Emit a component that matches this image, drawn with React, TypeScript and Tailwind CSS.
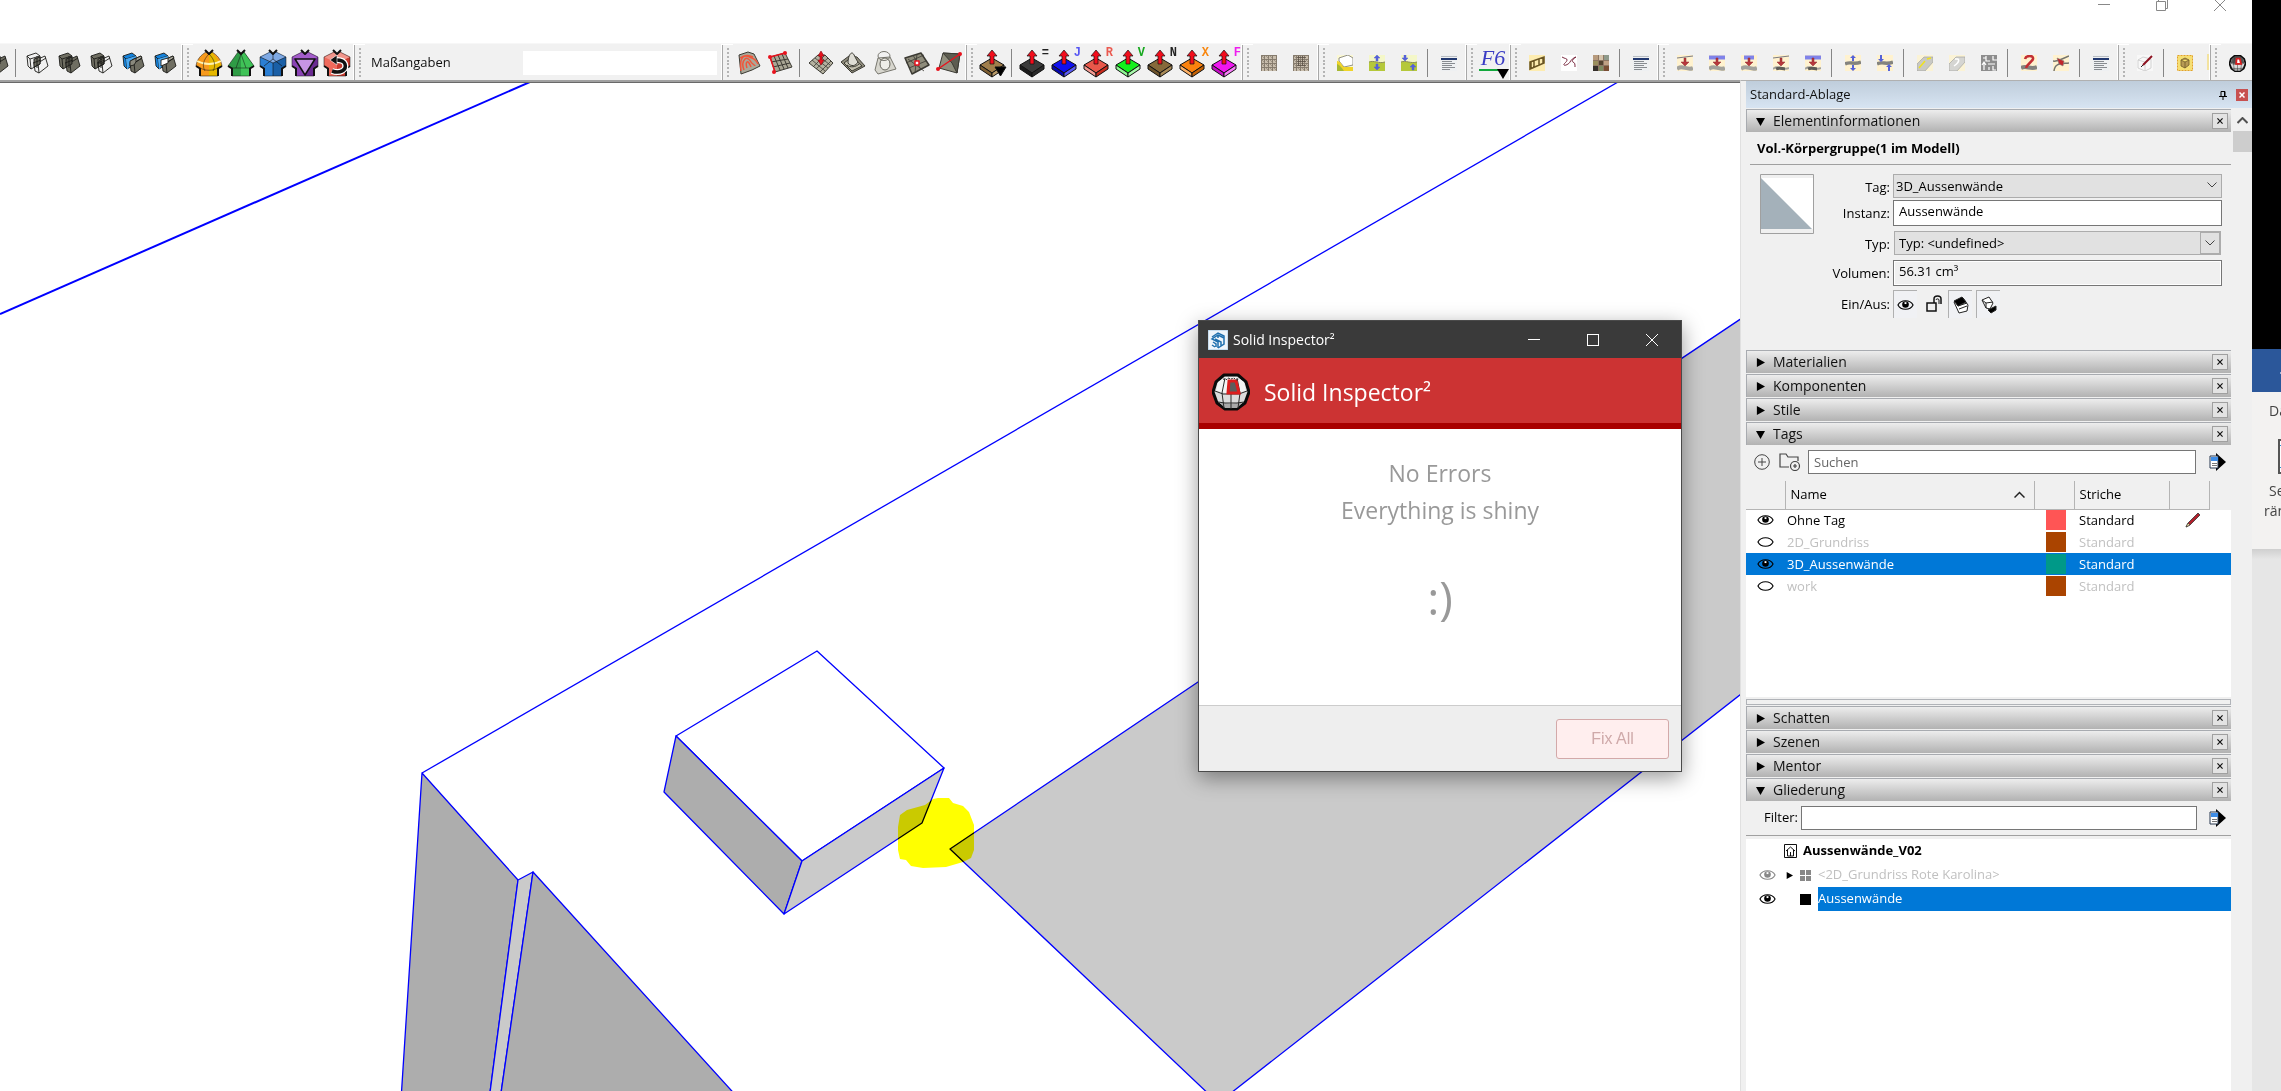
import React from 'react';

/* ---------- toolbar icons ---------- */

type Tone = { back: string; front: string; wire: boolean };

function SolidIcon({ kind }: { kind: number }) {
  const tones: Tone[] = [
    { back: 'none', front: 'none', wire: true },
    { back: '#6f6e62', front: '#6f6e62', wire: true },
    { back: '#6f6e62', front: 'none', wire: true },
    { back: '#1583dd', front: '#6f6e62', wire: false },
    { back: '#1583dd', front: '#6f6e62', wire: false },
  ];
  const t = tones[kind];
  return (
    <svg width="24" height="24" viewBox="0 0 24 24" strokeLinejoin="round" stroke="#1c1c18" strokeWidth=".9">
      <path d="M2 5l9-3 4 3v8l-9 5-3-3z" fill={t.back} />
      <path d="M2 5l3 3 10-3M5 8l1 10" fill="none" />
      {kind > 2 && <path d="M5 8l10-3v3l-6 3-2 7-1 0z" fill="#4aa9f2" stroke="none" />}
      <path d="M9 12l2-3 9-4 3 10-9 7-4-2z" fill={t.front} />
      {kind > 2 && <path d="M9 12l2-3 9-4 1 2-8 5z" fill="#a5a498" />}
      <path d="M9 12l4 0 8-5M13 12l1 10" fill="none" />
      {kind === 3 && <path d="M9 10l6-3v4l-2 3-4 1z" fill="#8a897d" />}
      {kind === 4 && <path d="M8 9l7-2v5l-7 3z" fill="#fff" />}
      {t.wire && <path d="M9 8l6-2v7l-6 3zM12 5v12M8 12l8-3" fill={kind === 0 ? '#6f6e62' : kind === 1 ? '#4f4e45' : 'none'} />}
    </svg>
  );
}

function GemIcon({ kind }: { kind: number }) {
  const p = [
    { l: '#f79a1e', r: '#e6b800', t: '#d9ab00' },
    { l: '#2f9c46', r: '#3fc257', t: '#2fae49' },
    { l: '#2b7fd4', r: '#1a5fa6', t: '#7ea9e4' },
    { l: '#8a43b6', r: '#6b2b93', t: '#a45dcb' },
    { l: '#ef6a5c', r: '#c73a2e', t: '#f2958b' },
  ][kind];
  const wide = kind >= 2;
  const outline = wide
    ? 'M1 8L11 3l3 2 3-2 10 5v9l-4 3v7H5v-7l-4-3z'
    : kind === 0
      ? 'M1 17C2 10 6 6 11 3l3 2 3-2c5 3 9 7 10 14l-4 2v8H5v-8z'
      : 'M1 17L11 3l3 2 3-2 10 14-4 2v8H5v-8z';
  return (
    <svg width="28" height="28" viewBox="0 0 28 28" strokeLinejoin="round" stroke="#111" strokeWidth="1">
      <path d={outline} fill={p.l} stroke="none" />
      <path d={wide ? 'M14 13L27 8v9l-4 3v7h-9z' : 'M14 5l3-2 10 14-4 2v8h-9z'} fill={p.r} stroke="none" />
      {wide && <path d="M1 8L11 3l3 2 3-2 10 5-13 6z" fill={p.t} stroke="none" />}
      {kind === 0 && <path d="M5 19l9-2v10H5z" fill="#f79a1e" stroke="none" />}
      <path d={outline} fill="none" strokeOpacity=".5" />
      <path d="M10 1l4 4 4-4M1 17l4 2.500v7.500M27 17l-4 2.500v7.500" fill="none" strokeWidth="2" />
      {kind === 0 && (
        <>
          <path d="M2 12c7 4 17 4 24 0" fill="none" stroke="#fff3b0" strokeWidth="2" />
          <path d="M14 5c-6 6-7 12-4 17M14 5c6 6 7 12 4 17M5 19c6 3 12 3 18 0" fill="none" strokeOpacity=".5" />
        </>
      )}
      {kind === 1 && <path d="M14 5l-5 14M14 5l5 14M5 19h18" fill="none" strokeOpacity=".5" />}
      {kind === 2 && <path d="M1 8l13 6 13-6M14 14v13M14 5v5l-9 7M14 10l9 7" fill="none" strokeOpacity=".6" />}
      {kind === 3 && <path d="M4 10h20l-10 16z" fill="#c795e4" strokeWidth="1.500" />}
      {kind === 4 && (
        <>
          <path d="M9 22c8 3 15-1 13-7-1-3-4-4-8-4" fill="none" stroke="#fff" strokeWidth="6" />
          <path d="M9 22c8 3 15-1 13-7-1-3-4-4-9-4" fill="none" strokeWidth="3.500" />
          <path d="M7 11l7-5v10z" fill="#111" stroke="#fff" strokeWidth=".6" />
        </>
      )}
    </svg>
  );
}

function TerrainIcon({ kind }: { kind: number }) {
  const g = '#a9a694';
  return (
    <svg width="26" height="26" viewBox="0 0 26 26" fill="none" strokeLinejoin="round" stroke="#3b3a33" strokeWidth="1">
      {kind === 0 && (
        <>
          <path d="M3 5l9-3 6 2 6 12-8 4-11 4z" fill="#aaa899" />
          <path d="M5 21c-1-7-1-11 2-14s6 0 9 1 5 4 6 6M8 20c-2-5-1-9 1-11s5 1 6 3 4 3 4 4M11 18c-1-3-1-5 0-6s3 2 4 5M4 8c4-3 9-3 13-1" stroke="#f1553a" strokeWidth="1.500" />
        </>
      )}
      {kind === 1 && (
        <>
          <path d="M2 7l15-4 7 14-17 5z" fill={g} />
          <path d="M6 6l6 14M10 5l6 14M14 4l6 14M3 12l17-3M5 17l17-4" />
          <path d="M2 7l15-4M2 7l5 15" stroke="#e8121d" strokeWidth="1.500" />
          <g fill="#e8121d" stroke="none"><circle cx="2" cy="7" r="2" /><circle cx="17" cy="3" r="2" /><circle cx="6" cy="22" r="2" /></g>
        </>
      )}
      {kind === 2 && (
        <>
          <path d="M1 13l9-8h7l8 8-10 11z" fill="#b4b1a0" />
          <path d="M4 10l13 11M7 8l13 10M10 5l12 10M5 17L17 5M8 19L20 8M12 22l11-11" strokeWidth=".8" />
          <path d="M13 1l3 5h-2v4h2l-3 5-3-5h2V6h-2z" fill="#e8121d" stroke="#8a0a10" strokeWidth=".6" />
        </>
      )}
      {kind === 3 && (
        <>
          <path d="M1 12l8-6 8 1 8 9-13 7z" fill="#8f8c7c" />
          <path d="M4 13l8-6 10 9-10 5z" fill="#c2bfae" />
          <path d="M8 13c0-6 2-10 4-10s3 5 6 9c-2 4-7 5-10 1z" fill="#deddd5" />
          <path d="M7 15c3 3 9 2 12-1" />
        </>
      )}
      {kind === 4 && (
        <>
          <path d="M6 8l12-1 6 12-18 5-3-4z" fill="#d7d6ce" stroke="#77766e" />
          <ellipse cx="13" cy="14" rx="5" ry="6" fill="#efeee8" stroke="#66655c" />
          <ellipse cx="12" cy="6" rx="6" ry="4.500" stroke="#77766e" />
        </>
      )}
      {kind === 5 && (
        <>
          <path d="M1 8l16-5 8 12-17 9z" fill="#8f8d7c" strokeWidth="1.500" />
          <path d="M4 9l16 12M9 5l8 15M2 13l18-8M5 18l17-7M13 4l-2 19" strokeWidth=".8" />
          <rect x="11" y="11" width="4" height="4" fill="#fff" stroke="#e8121d" strokeWidth="1.500" />
        </>
      )}
      {kind === 6 && (
        <>
          <path d="M7 3l17 1-3 19-18-5z" fill="#908f7e" />
          <path d="M7 3l9 10 5 10 3-19z" fill="#5d5c50" />
          <path d="M2 19L24 4" stroke="#e8121d" strokeWidth="1.500" />
          <g fill="#e8121d" stroke="none"><circle cx="2" cy="19" r="2" /><circle cx="24" cy="4" r="2" /></g>
        </>
      )}
    </svg>
  );
}

type PushProps = { top: string; left: string; right: string; mark?: string; markClass?: string; drop?: boolean };

function PushIcon({ top, left, right, mark, markClass, drop }: PushProps) {
  return (
    <span className="relative flex size-8 items-center justify-center">
      <svg width="28" height="30" viewBox="0 0 28 30" strokeLinejoin="round" stroke="#111" strokeWidth="1">
        <path d="M1 17l12-7 12 7-12 8z" fill={top} />
        <path d="M1 17l12 8v4L1 21z" fill={left} />
        <path d="M25 17l-12 8v4l12-8z" fill={right} />
        <path d="M13 2l5 6h-3v8h-4V8H8z" fill="#f20d1c" strokeWidth=".7" />
        {drop && <path d="M16 19h11l-5.500 9z" fill="#000" />}
      </svg>
      {mark && <span className={`absolute top-0 right-0 font-['Liberation_Mono'] text-xs leading-3 font-bold ${markClass}`}>{mark}</span>}
    </span>
  );
}

function SmallIcon({ kind }: { kind: string }) {
  const bg: Record<string, string> = {
    mesh1: '#c8bdac', mesh2: '#c8bdac', yellow: '#fbf8d4', up1: '#f4f7c8', up2: '#f4f7c8', fence: '#fdecb0', curve: '#fff',
    tiles: '#8d7663', list: '#eef0f2', cube: '#fbf3d6', road1: '#fbf3d6', road2: '#fbf3d6',
  };
  const thin = kind === 'drop1' || kind === 'drop4';
  return (
    <svg width="16" height="16" viewBox="0 0 16 16" fill="none" stroke="#4a4a46" strokeWidth="1">
      <rect width="16" height="16" fill={bg[kind] ?? '#fff2cf'} stroke="none" />
      {(kind === 'mesh1' || kind === 'mesh2') && (
        <>
          <path d="M.5 0v16M3.500 0v16M7.500 0v16M11.500 0v16M15.500 0v16M0 .5h16M0 4.500h16M0 8.500h16M0 12.500h16" stroke="#857b6d" />
          <path d="M0 0l16 16M8 0l8 8M0 8l8 8M4 0l12 12M0 4l12 12" stroke="#8d8374" strokeWidth=".7" />
          {kind === 'mesh2' && <path d="M4 2.500h9M4 6.500h9M4 10.500h9M5.500 1v10M9.500 1v10" stroke="#5a5146" strokeWidth=".8" />}
        </>
      )}
      {kind === 'yellow' && (
        <>
          <path d="M0 8l5 2 3 6H0z" fill="#a7b831" stroke="none" />
          <path d="M2 3l9-3 5 3v7l-9 2-5-6z" fill="#fff" stroke="#77766a" strokeWidth=".8" />
          <path d="M0 6c4 0 4 4 7 6h9v4H7C4 12 3 10 0 9z" fill="#f0d428" stroke="none" />
        </>
      )}
      {(kind === 'up1' || kind === 'up2') && (
        <>
          <path d="M0 7c5-2 10 2 16 0v9H0z" fill="#b5c83a" stroke="none" />
          <path d="M0 7c5-2 10 2 16 0" stroke="#8b8d5b" />
          {kind === 'up1'
            ? <path d="M8 0l3 3H9v3H7V3H5zM8 15l3-3H9V9H7v3H5z" fill="#5561d8" stroke="#5561d8" strokeWidth=".5" />
            : <path d="M4 6l3-3H5V0H3v3H1zM12 9l3 3h-2v3h-2v-3H9z" fill="#5561d8" stroke="#5561d8" strokeWidth=".5" />}
        </>
      )}
      {kind === 'list' && (
        <>
          <path d="M0 4h16" stroke="#22386f" strokeWidth="2" />
          <path d="M0 1.500h16" stroke="#b9bdc2" />
          <path d="M1 6.500h10M1 8.500h13M1 10.500h10M1 12.500h13M1 14.500h8" stroke="#7c8086" strokeWidth=".9" />
        </>
      )}
      {kind === 'fence' && <path d="M1 7l14-5v6L1 14zM5 6v6M10 4v6M2 14V6M14 2v7" stroke="#6a5524" strokeWidth="1.500" />}
      {kind === 'curve' && <path d="M1 2c3 2 5 1 5 3S2 9 3 10s5-1 6-3 3-4 6-5c-3 2-5 4-3 5s2 2 2 5" stroke="#7a2a40" />}
      {kind === 'tiles' && (
        <>
          <path d="M0 0h5v5H0z" fill="#b79a7c" stroke="none" /><path d="M6 0h4v5H6z" fill="#d5c4ac" stroke="none" /><path d="M11 0h5v5h-5z" fill="#8f9a8b" stroke="none" />
          <path d="M0 6h5v4H0z" fill="#9a8f5e" stroke="none" /><path d="M6 6h4v4H6z" fill="#53422f" stroke="none" /><path d="M11 6h5v4h-5z" fill="#c0a184" stroke="none" />
          <path d="M0 11h5v5H0z" fill="#35302b" stroke="none" /><path d="M6 11h4v5H6z" fill="#7d8c62" stroke="none" /><path d="M11 11h5v5h-5z" fill="#7a4e33" stroke="none" />
        </>
      )}
      {kind.startsWith('drop') && (
        <>
          <path d={thin ? 'M0 3L16 1' : kind === 'drop3' ? 'M3 2.500h10' : 'M0 2.500h16'} stroke={thin ? '#7b7a80' : '#7f82ea'} strokeWidth={thin ? 1 : 4} />
          <path d="M0 14c5-5 10 2 16-1" stroke="#a3a29c" strokeWidth={kind === 'drop4' || kind === 'drop5' ? 2 : 4} />
          {(kind === 'drop4' || kind === 'drop5') && <path d="M3 14c4-2 6 0 9 0" stroke="#5e5d57" strokeWidth="3" />}
          <path d="M7 3h2v4h3l-4 4-4-4h3z" fill="#b8383c" stroke="#8f2a2e" strokeWidth=".5" />
        </>
      )}
      {(kind === 'shift1' || kind === 'shift2') && (
        <>
          <path d="M0 9c5-3 9 1 16-2" stroke="#84837e" strokeWidth="3.500" />
          {kind === 'shift1'
            ? <path d="M8 0l3 3H9v3H7V3H5zM8 16l3-3H9v-3H7v3H5z" fill="#5561d8" stroke="none" />
            : <path d="M4 7l3-3H5V0H3v4H1zM12 9l3 3h-2v4h-2v-4H9z" fill="#5561d8" stroke="none" />}
        </>
      )}
      {kind === 'road1' && <><path d="M0 9L7 2h9v5l-8 9H0z" fill="#c9c9c4" stroke="#a5a5a0" strokeWidth=".7" /><path d="M2 13L8 6M10 4l4-1" stroke="#f0e21c" strokeWidth="1.500" /></>}
      {kind === 'road2' && <><path d="M0 9L7 2h9v5l-8 9H0z" fill="#d5d5d2" stroke="#a5a5a0" strokeWidth=".7" /><path d="M5 11c3-2 6-5 4-7H6" stroke="#fff" strokeWidth="1.500" /></>}
      {kind === 'maze' && <><rect width="16" height="16" fill="#8d8d8d" stroke="none" /><path d="M3 15V8M1 10l2-3 2 3M5 1v5h4M12 1v4h4M7 9h7M8 12v3M12 11v4h3M2 3h3" stroke="#fff" strokeWidth="1.200" /></>}
      {kind === 'q1' && <><path d="M0 13c5-3 10 2 16-1" stroke="#84837e" strokeWidth="4" /><path d="M4 4c1-4 9-4 8 0-1 3-6 5-7 9" stroke="#c32f33" strokeWidth="2.500" /></>}
      {kind === 'q2' && <><path d="M0 6c5 1 8-2 16-5M1 16c1-8 6-7 15-8" stroke="#75746e" strokeWidth="1.500" /><path d="M4 3l7 3-1 5-4-2z" fill="#c2262c" stroke="#84837e" strokeWidth=".6" /></>}
      {kind === 'pen' && <><rect width="16" height="16" fill="#f8f8f8" stroke="none" /><path d="M1 5l5-3 8 2v9l-6 3-7-3zM1 5l7 2v9M8 7l6-3" stroke="#c9c9c9" strokeWidth=".8" /><path d="M6 10l9-9" stroke="#8d1220" strokeWidth="2" /><path d="M4 12l2-2" stroke="#222" /></>}
      {kind === 'cube' && <><rect x=".5" y=".5" width="15" height="15" fill="#f6df72" stroke="#e0a12c" strokeDasharray="2 1" /><path d="M4 5l4-2 4 2v5l-4 3-4-2zM4 5l4 2 4-2M8 7v6" fill="#b79a54" stroke="#6f5a28" strokeWidth=".8" /></>}
    </svg>
  );
}

function BallIcon({ size, dark }: { size: number; dark?: boolean }) {
  return (
    <svg width={size} height={size} viewBox="0 0 38 38" fill="none" stroke="#2b2b2b" strokeWidth="1">
      <path d="M12 2h14l8 7 3 10-4 11-8 6H13l-8-6-4-11 3-10z" fill="#dcdcdc" stroke="#0b0b0b" strokeWidth={dark ? 4 : 3} strokeLinejoin="round" />
      <path d="M6 9l7-5h12l7 5 2 9-15 3L4 18z" fill={dark ? '#555' : '#f4f4f4'} stroke="none" />
      <path d="M7 29l12 2 12-2-6 6H13z" fill="#a9a9a9" stroke="none" />
      <path d="M3 18l8 3h16l8-3M6 29l7 1h12l7-1M13 5l-3 15 2 15M25 5l3 15-2 15M19 21v15" />
      <path d="M17 8h7l3 12H16z" fill={dark ? '#fff' : '#5c5c5c'} stroke="#dc1e1e" strokeWidth={dark ? 4 : 3} />
      <path d="M11 6l3 1 2-2 3 1 3-1 2 2 3-1" stroke="#333" strokeDasharray="2 1" />
    </svg>
  );
}

/* ---------- toolbar layout ---------- */

function Slot({ children, label }: { children: React.ReactNode; label: string }) {
  return (
    <button type="button" aria-label={label} className="flex h-9 w-8 shrink-0 items-center justify-center pt-0.5">
      {children}
    </button>
  );
}

function Sep() {
  return (
    <span className="flex w-2 shrink-0 items-center pt-0.5 pl-0.5">
      <span className="h-7 w-px bg-[#858585]" />
    </span>
  );
}

function Grip() {
  return (
    <span className="flex w-3 shrink-0 items-stretch border-t border-white">
      <span className="w-px bg-white" />
      <span className="w-px bg-[#a8a8a8]" />
      <span className="my-0.5 ml-1 flex flex-col justify-around">
        {Array.from({ length: 8 }, (_, i) => <span key={i} className="size-0.5 bg-[#b4b4b4]" />)}
      </span>
    </span>
  );
}

function Small({ names }: { names: string[] }) {
  return <>{names.map((n, i) => <Slot key={i} label={n}><SmallIcon kind={n} /></Slot>)}</>;
}

function Toolbar() {
  const push: PushProps[] = [
    { top: '#3a3a3a', left: '#1b1b1b', right: '#2a2a2a', mark: '=', markClass: 'text-[#222222]' },
    { top: '#1010f0', left: '#0505b0', right: '#5a5af5', mark: 'J', markClass: 'text-[#5555f2]' },
    { top: '#e8574a', left: '#f59a92', right: '#c82a1c', mark: 'R', markClass: 'text-[#ea5a50]' },
    { top: '#14f01c', left: '#8df792', right: '#a8f8ab', mark: 'V', markClass: 'text-[#17a81f]' },
    { top: '#86693a', left: '#6d532b', right: '#a98b58', mark: 'N', markClass: 'text-[#222222]' },
    { top: '#fb820e', left: '#fdb066', right: '#c56205', mark: 'X', markClass: 'text-[#f8860e]' },
    { top: '#f016f0', left: '#c60cc6', right: '#f97cf9', mark: 'F', markClass: 'text-[#ee1cee]' },
  ];
  return (
    <div className="flex h-[37px] shrink-0 overflow-hidden border-t border-[#f7f7f7] bg-[#f1f1f1]">
      <div className="-ml-[19px] flex shrink-0">
        <Slot label="Außenhülle"><SolidIcon kind={1} /></Slot>
        <Sep />
        {[0, 1, 2, 3, 4].map((k) => <Slot key={k} label={`Volumenkörper ${k + 1}`}><SolidIcon kind={k} /></Slot>)}
        <Grip />
        {[0, 1, 2, 3, 4].map((k) => <Slot key={k} label={`Form ${k + 1}`}><GemIcon kind={k} /></Slot>)}
        <Grip />
        <label className="flex w-[356px] items-center justify-between pt-0.5 pr-1 pl-1.5 text-[13px] text-[#111111]">
          Maßangaben
          <input type="text" className="h-6 w-[194px] bg-white px-1 outline-none" />
        </label>
        <Grip />
        {[0, 1].map((k) => <Slot key={k} label={`Sandkasten ${k + 1}`}><TerrainIcon kind={k} /></Slot>)}
        <Sep />
        {[2, 3, 4, 5, 6].map((k) => <Slot key={k} label={`Sandkasten ${k + 1}`}><TerrainIcon kind={k} /></Slot>)}
        <Grip />
        <Slot label="Push Pull"><PushIcon top="#a07e4b" left="#7d5e31" right="#b89a68" drop /></Slot>
        <Sep />
        {push.map((p) => <Slot key={p.mark} label={`Push Pull ${p.mark}`}><PushIcon {...p} /></Slot>)}
        <Grip />
        <Small names={['mesh1', 'mesh2']} />
        <Grip />
        <Small names={['yellow', 'up1', 'up2']} />
        <Sep />
        <Small names={['list']} />
        <Grip />
        <Slot label="Fredo6">
          <span className="relative flex size-8 items-start justify-center">
            <span className="border-b-2 border-[#12a83c] px-0.5 font-['Liberation_Serif'] text-[22px] leading-[22px] text-[#3a3cc4] italic">F6</span>
            <svg className="absolute right-0 bottom-0" width="12" height="10" viewBox="0 0 12 10"><path d="M0 0h12L6 10z" /></svg>
          </span>
        </Slot>
        <Grip />
        <Small names={['fence', 'curve', 'tiles']} />
        <Sep />
        <Small names={['list']} />
        <Grip />
        <Small names={['drop1', 'drop2', 'drop3', 'drop4', 'drop5']} />
        <Sep />
        <Small names={['shift1', 'shift2']} />
        <Sep />
        <Small names={['road1', 'road2', 'maze']} />
        <Sep />
        <Small names={['q1', 'q2']} />
        <Sep />
        <Small names={['list']} />
        <Grip />
        <Small names={['pen']} />
        <Sep />
        <Small names={['cube']} />
        <span className="flex w-2 shrink-0 items-center justify-end"><span className="h-4 w-0.5 bg-[#f3e3a0]" /></span>
        <Grip />
        <Slot label="Solid Inspector"><BallIcon size={17} dark /></Slot>
      </div>
    </div>
  );
}

/* ---------- model view ---------- */

function Model() {
  return (
    <svg className="block h-full w-full" aria-label="Modellansicht" stroke="#0000ff" strokeWidth="1.300" strokeLinejoin="round" fill="none">
      <g transform="translate(0 -83)">
        <path d="M0 314L530 82" strokeWidth="2" />
        <path d="M422 773L1618 82" />
        <path d="M422 773L518 880L489 1100H401z" fill="#adadad" />
        <path d="M518 880l15-8L500 1100H489z" fill="#cacaca" />
        <path d="M533 872L740 1100H500z" fill="#adadad" />
        <path d="M817 651L944 768L802 861L676 736z" fill="#fff" />
        <path d="M676 736L802 861L784 914L664 792z" fill="#adadad" />
        <path d="M802 861L944 768L922 823L784 914z" fill="#cacaca" />
        <path d="M950 849L1198 682L1745 316V691L1222 1100H1215z" fill="#cacaca" />
        <path d="M933 799L938 798H949L953 803L963 806L969 812L974 825V850L971 858L963 862L946 867L923 868L911 866L906 860L900 859L898 850V827L900 815L907 810L925 805z" className="mix-blend-multiply" fill="#ffff00" stroke="none" />
      </g>
    </svg>
  );
}

function InspectorDialog() {
  return (
    <section aria-label="Solid Inspector" className="absolute top-[238px] left-[1198px] flex h-[452px] w-[484px] flex-col border border-[#4a4a4a] bg-white shadow-[0_6px_20px_rgba(0,0,0,0.4)]">
      <header className="flex h-[37px] items-center bg-[#3a3a3a] pl-[9px] text-white">
        <svg width="20" height="20" viewBox="0 0 20 20" fill="none" stroke="#1f6fae" strokeWidth="1.500">
          <rect width="20" height="20" fill="#eef4fa" stroke="#9fc4e2" strokeWidth="1" />
          <path d="M4 7l6-4 6 3v8l-6 4M16 8l-6-3-6 4 6 3v6M5 12l3 2v3M7 9l6 3v4M4 15l3 2M10 5v3" />
        </svg>
        <h2 className="ml-[5px] flex-1 text-sm">Solid Inspector²</h2>
        <button type="button" aria-label="Minimieren" className="flex h-full w-[59px] items-center justify-center"><span className="h-px w-3 bg-white" /></button>
        <button type="button" aria-label="Maximieren" className="flex h-full w-[59px] items-center justify-center"><span className="size-3 border border-white" /></button>
        <button type="button" aria-label="Schließen" className="flex h-full w-[59px] items-center justify-center">
          <svg width="12" height="12" viewBox="0 0 12 12" stroke="#fff"><path d="M0 0l12 12M12 0L0 12" /></svg>
        </button>
      </header>
      <div className="flex h-[71px] items-center gap-3.5 border-b-6 border-[#a90000] bg-[#cc3333] pt-0.5 pl-[13px] text-white">
        <BallIcon size={38} />
        <h1 className="text-[23px] leading-8">Solid Inspector²</h1>
      </div>
      <div className="flex-1 pt-[26px] text-center text-[23px] leading-[37px] text-[#999999]">
        <p>No Errors</p>
        <p>Everything is shiny</p>
        <p className="pt-[38px] text-[46px] leading-[60px]">:)</p>
      </div>
      <footer className="flex h-[66px] items-center justify-end border-t border-[#cccccc] bg-[#eeeeee] pr-3">
        <button type="button" disabled className="h-10 w-[113px] rounded-[3px] border border-[#d3a9a9] bg-[#ffeeee] font-['Liberation_Sans'] text-base text-[#cfa9a9]">Fix All</button>
      </footer>
    </section>
  );
}

/* ---------- tray ---------- */

function Triangle({ open, size = 9 }: { open?: boolean; size?: number }) {
  return (
    <svg width={size} height={size} viewBox="0 0 10 10" className="shrink-0"><path d={open ? 'M0 1h10L5 10z' : 'M1 0l9 5-9 5z'} /></svg>
  );
}

function PanelHeader({ title, open }: { title: string; open?: boolean }) {
  return (
    <header className="mb-px flex h-[23px] shrink-0 items-center border-t border-l border-[#a8abb0] bg-linear-to-b from-[#ededed] to-[#b2b2b2] pr-[3px] pl-[9px]">
      <Triangle open={open} />
      <h3 className="ml-2 flex-1 text-sm leading-5 text-[#111111]">{title}</h3>
      <button type="button" aria-label={`${title} schließen`} className="flex size-4 items-center justify-center border border-[#a0a0a0] bg-[#e3e3e3]">
        <svg width="6" height="6" viewBox="0 0 7 6" stroke="#111" strokeWidth="1.400"><path d="M.5 0l6 6M6.500 0l-6 6" /></svg>
      </button>
    </header>
  );
}

function Eye({ closed, className }: { closed?: boolean; className?: string }) {
  return (
    <svg width="17" height="12" viewBox="0 0 18 12" className={className} fill="none" stroke="currentColor" strokeWidth="1.200">
      <path d="M1 6C4 0 14 0 17 6 14 12 4 12 1 6z" fill="#fff" fillOpacity={closed ? 1 : 0} />
      {!closed && <><circle cx="9" cy="5.500" r="3.500" fill="currentColor" stroke="none" /><rect x="8" y="3" width="2" height="2" fill="#fff" stroke="none" /></>}
    </svg>
  );
}

function ArrowMenu() {
  return (
    <button type="button" aria-label="Details" className="shrink-0">
      <svg width="18" height="20" viewBox="0 0 18 20">
        <path d="M7 1l10 9-10 9z" fill="#000" />
        <path d="M1 4h8v12H1z" fill="#fff" stroke="#26364f" />
        <path d="M2 5h7v4H2z" fill="#3f8de6" />
        <path d="M3 11.500h5M3 13.500h5" stroke="#777" />
      </svg>
    </button>
  );
}

function Chevron() {
  return <svg width="10" height="6" viewBox="0 0 10 6" fill="none" stroke="#444"><path d="M.5.5L5 5 9.500.5" /></svg>;
}

const toggle = 'flex h-7 w-[25px] items-center justify-center';
const toggleOn = 'flex h-7 w-6 items-center justify-center border-t border-l border-[#b0b0b0] bg-[#f0f1f4]';

function ElementInfo() {
  return (
    <section>
      <PanelHeader title="Elementinformationen" open />
      <h4 className="ml-1 flex h-8 items-center border-b border-[#a0a0a0] pl-[7px] text-[13px] font-bold">Vol.-Körpergruppe(1 im Modell)</h4>
      <div className="flex pt-[9px] pr-[9px] pl-3.5">
        <svg width="54" height="60" viewBox="0 0 54 60" aria-label="Material">
          <path d="M.5.500h53v59H.5z" fill="#f0f0f0" stroke="#a0a0a0" />
          <path d="M1 4h52v51H1z" fill="#fff" />
          <path d="M1 4l51 51H1z" fill="#a4b1ba" />
        </svg>
        <div className="grid h-[176px] flex-1 grid-cols-[76px_1fr] content-start gap-x-[3px] text-[13px] leading-5">
          <label htmlFor="tag" className="flex h-[26px] items-center justify-end">Tag:</label>
          <span className="relative h-[26px]">
            <select id="tag" className="h-6 w-full appearance-none border border-[#acacac] bg-[#e1e1e1] pl-0.5"><option>3D_Aussenwände</option></select>
            <span className="pointer-events-none absolute top-2 right-[5px] flex"><Chevron /></span>
          </span>
          <label htmlFor="inst" className="flex h-[26px] items-center justify-end">Instanz:</label>
          <input id="inst" defaultValue="Aussenwände" className="mb-[5px] h-[26px] w-full border border-[#767676] bg-white pb-1 pl-[5px]" />
          <label htmlFor="typ" className="flex h-[26px] items-center justify-end">Typ:</label>
          <span className="relative h-[29px] px-px">
            <select id="typ" className="h-6 w-full appearance-none border border-[#acacac] bg-[#e1e1e1] pl-1"><option>Typ: &lt;undefined&gt;</option></select>
            <span className="pointer-events-none absolute top-px right-0.5 flex h-[22px] w-5 items-center justify-center border border-[#acacac]"><Chevron /></span>
          </span>
          <label htmlFor="vol" className="flex h-[26px] items-center justify-end">Volumen:</label>
          <input id="vol" readOnly value="56.31 cm³" className="mb-1 h-[26px] w-full border border-[#767676] bg-[#f0f0f0] pb-1 pl-[5px] shadow-[inset_0_0_0_1px_#ffffff]" />
          <span className="flex h-[28px] items-center justify-end">Ein/Aus:</span>
          <span className="flex">
            <button type="button" aria-label="Sichtbar" className={toggleOn}><Eye /></button>
            <button type="button" aria-label="Sperren" className={`${toggle} ml-1`}>
              <svg width="18" height="18" viewBox="0 0 18 18" fill="none" stroke="#111" strokeWidth="1.500"><path d="M2 8h9v8H2zM9 8V4c0-4 7-4 7 0v5" /><path d="M11 5c0-1.500 3-1.500 3 0v4" strokeWidth="1" /></svg>
            </button>
            <button type="button" aria-label="Schatten empfangen" className={`${toggleOn} ml-0.5`}>
              <svg width="16" height="18" viewBox="0 0 16 18" fill="#fff" stroke="#222" strokeWidth="1"><path d="M1 6l9-4 5 7-1 6-8 2z" /><path d="M1 5l8-4 4 5-8 4z" fill="#000" /><path d="M5 10l9-3M6 13l8-3" /></svg>
            </button>
            <button type="button" aria-label="Schatten werfen" className={`${toggleOn} ml-1`}>
              <svg width="16" height="18" viewBox="0 0 16 18" fill="#fff" stroke="#222" strokeWidth="1"><path d="M1 4l7-3 4 6-3 6-4-1z" /><path d="M1 4l4 3 7-1M5 7v5" /><path d="M7 14l8-4v4l-5 3z" fill="#000" /></svg>
            </button>
          </span>
        </div>
      </div>
    </section>
  );
}

const tags = [
  { name: 'Ohne Tag', swatch: 'bg-[#ff5555]', row: 'text-black', off: false, pen: true },
  { name: '2D_Grundriss', swatch: 'bg-[#aa4400]', row: 'text-[#c0c0c0]', off: true, pen: false },
  { name: '3D_Aussenwände', swatch: 'bg-[#009988]', row: 'bg-[#0078d7] text-white', off: false, pen: false },
  { name: 'work', swatch: 'bg-[#aa4400]', row: 'text-[#c0c0c0]', off: true, pen: false },
];

function TagsPanel() {
  const th = 'border-r border-b border-[#b4b4b4] p-0 text-left font-normal';
  return (
    <section>
      <PanelHeader title="Tags" open />
      <div className="flex h-[35px] items-center pb-[3px] pl-2">
        <button type="button" aria-label="Tag hinzufügen">
          <svg width="16" height="16" viewBox="0 0 16 16" fill="none" stroke="#444"><circle cx="8" cy="8" r="7.300" /><path d="M8 4v8M4 8h8" /></svg>
        </button>
        <button type="button" aria-label="Tag-Ordner hinzufügen" className="ml-[9px]">
          <svg width="22" height="18" viewBox="0 0 22 18" fill="none" stroke="#444" strokeWidth="1.200"><path d="M10 14H1V1h6l2 3h10v4" /><circle cx="16" cy="13" r="4.500" fill="#f0f0f0" /><path d="M16 11v4M14 13h4" /></svg>
        </button>
        <input aria-label="Suchen" placeholder="Suchen" className="ml-[7px] h-6 min-w-0 flex-1 border border-[#767676] bg-white pl-[5px] text-[13px] placeholder:text-[#666666]" />
        <span className="flex w-[35px] pl-[13px]"><ArrowMenu /></span>
      </div>
      <div className="h-[216px] bg-white text-[13px]">
        <table className="w-full table-fixed border-collapse">
          <colgroup><col className="w-[39px]" /><col /><col className="w-10" /><col className="w-[95px]" /><col className="w-10" /><col className="w-[22px]" /></colgroup>
          <thead>
            <tr className="h-7 bg-[#f0f0f0]">
              <th className={th} aria-label="Sichtbar" />
              <th className={th}>
                <span className="flex items-center justify-between pr-[9px] pl-[5px]">Name<svg width="11" height="7" viewBox="0 0 11 7" fill="none" stroke="#222" strokeWidth="1.500"><path d="M.5 6.500l5-5 5 5" /></svg></span>
              </th>
              <th className={th} aria-label="Farbe" />
              <th className={`${th} pl-[5px]`}>Striche</th>
              <th className={th} aria-label="Aktiv" />
              <th className="border-b border-[#f0f0f0] p-0" aria-label="Rand" />
            </tr>
          </thead>
          <tbody>
            {tags.map((t) => (
              <tr key={t.name} className={`h-[22px] ${t.row}`}>
                <td className="p-0 pl-[11px]"><Eye closed={t.off} className="text-black" /></td>
                <td className="p-0 pl-0.5 leading-5">{t.name}</td>
                <td className="p-0"><span className={`ml-3 block h-5 w-5 ${t.swatch}`} /></td>
                <td className="p-0 pl-[5px] leading-5">Standard</td>
                <td className="p-0 pl-4">
                  {t.pen && <svg width="16" height="16" viewBox="0 0 16 16"><path d="M1 15l2-4L13 1l2 2L5 13z" fill="#b1202c" stroke="#333" strokeWidth=".8" /><path d="M1 15l2-4 2 2z" fill="#e8d9a0" stroke="#222" strokeWidth=".5" /></svg>}
                </td>
                <td className="p-0" />
              </tr>
            ))}
          </tbody>
        </table>
      </div>
    </section>
  );
}

function OutlinePanel() {
  return (
    <section className="flex flex-1 flex-col text-[13px]">
      <PanelHeader title="Gliederung" open />
      <label className="flex h-[34px] items-center border-b border-[#a0a0a0] pb-px pl-[18px]">
        Filter:
        <input className="ml-[3px] h-6 min-w-0 flex-1 border border-[#767676] bg-white px-1" />
        <span className="flex w-[34px] pl-3"><ArrowMenu /></span>
      </label>
      <ul className="mt-[3px] flex-1 bg-white">
        <li className="flex h-6 items-center gap-1.5 pl-[38px] font-bold">
          <svg width="13" height="14" viewBox="0 0 13 14" fill="none" stroke="#111"><path d="M.5.500h12v13H.5z" /><path d="M2 7l4.500-4L11 7M3.500 6v6h6V6M6.500 12V8" /></svg>
          Aussenwände_V02
        </li>
        <li className="flex h-6 items-center pl-[13px] text-[#c0c0c0]">
          <Eye className="text-[#888888]" />
          <span className="ml-2.5 flex w-3.5 text-black"><Triangle size={7} /></span>
          <span className="grid size-[11px] grid-cols-2 gap-px">
            <span className="bg-[#888888]" /><span className="bg-[#888888]" /><span className="bg-[#888888]" /><span className="bg-[#888888]" />
          </span>
          <span className="ml-[7px]">&lt;2D_Grundriss Rote Karolina&gt;</span>
        </li>
        <li className="flex h-6 items-center pl-[13px]">
          <Eye />
          <span className="ml-6 size-[11px] bg-black" />
          <span className="ml-[7px] flex h-6 flex-1 items-center bg-[#0078d7] text-white">Aussenwände</span>
        </li>
      </ul>
    </section>
  );
}

function Tray() {
  return (
    <aside className="flex w-[512px] shrink-0 flex-col border-t border-l border-t-[#b0b0b0] border-l-[#e0e0e0] bg-[#f0f0f0] pl-[5px] text-black">
      <header className="flex h-[27px] shrink-0 items-center bg-linear-to-b from-[#bfcddb] to-[#d7e4f2] pt-px pr-1 pl-1">
        <h2 className="flex-1 text-[13px] text-[#111111]">Standard-Ablage</h2>
        <button type="button" aria-label="Anheften" className="mr-[9px]">
          <svg width="8" height="9" viewBox="0 0 8 9" fill="none" stroke="#000"><path d="M2 .5h4v5H2zM5.500 0v6M0 5.500h8M4 6v3" /></svg>
        </button>
        <button type="button" aria-label="Ablage schließen" className="flex size-3 items-center justify-center bg-[#c75050]">
          <svg width="6" height="6" viewBox="0 0 6 6" stroke="#fff" strokeWidth="1.500"><path d="M.5.5l5 5M5.500.5l-5 5" /></svg>
        </button>
      </header>
      <div className="flex min-h-0 flex-1">
        <div className="flex min-w-0 flex-1 flex-col pt-px">
          <ElementInfo />
          <PanelHeader title="Materialien" />
          <PanelHeader title="Komponenten" />
          <PanelHeader title="Stile" />
          <TagsPanel />
          <div className="mt-0.5 mb-px h-1.5 shrink-0 border border-[#b0b3b8]" />
          <PanelHeader title="Schatten" />
          <PanelHeader title="Szenen" />
          <PanelHeader title="Mentor" />
          <OutlinePanel />
        </div>
        <div className="ml-px flex w-5 flex-col items-center">
          <svg className="mt-[9px] shrink-0" width="11" height="7" viewBox="0 0 11 7" fill="none" stroke="#505050" strokeWidth="2"><path d="M.5 6l5-5 5 5" /></svg>
          <div className="mt-[7px] h-[21px] w-[19px] bg-[#cdcdcd]" />
        </div>
      </div>
    </aside>
  );
}

function BackgroundWindow() {
  return (
    <div className="flex w-[29px] shrink-0 flex-col overflow-hidden bg-[#e6e6e6] text-sm whitespace-nowrap text-[#444444]">
      <div className="h-[349px] bg-black" />
      <div className="flex h-[43px] items-center justify-end bg-[#2b579a]"><span className="mt-1 h-0.5 w-px bg-[#9db4d8]" /></div>
      <div className="h-[157px] bg-[#f3f2f1] pt-[9px] pl-[17px]">
        <p className="leading-5">Da</p>
        <div className="mt-[18px] ml-[9px] h-[35px] w-6 border-2 border-[#555555] bg-white py-1">
          <div className="h-full border-y border-[#2f8fd0]" />
        </div>
        <p className="mt-[7px] leading-5">Se</p>
        <p className="-ml-[5px] leading-5">rän</p>
      </div>
      <div className="h-2.5 bg-linear-to-b from-[#cfcfcf] to-[#e6e6e6]" />
    </div>
  );
}

export default function App() {
  return (
    <div className="flex h-screen overflow-hidden bg-white font-['Open_Sans','Noto_Sans',sans-serif] text-black">
      <div className="flex min-w-0 flex-1 flex-col">
        <div className="flex h-[43px] shrink-0 items-start justify-end gap-[46px] pr-[26px]">
          <button type="button" aria-label="Minimieren" className="flex h-[5px] items-end"><span className="h-px w-3 bg-[#888888]" /></button>
          <button type="button" aria-label="Verkleinern">
            <svg width="12" height="11" viewBox="0 0 12 11" fill="none" stroke="#888"><path d="M.5 1.500h9v9h-9zM2.500 1V-1M11.500 0v8.500H10" /></svg>
          </button>
          <button type="button" aria-label="Schließen">
            <svg width="12" height="11" viewBox="0 0 12 11" stroke="#888"><path d="M0-1l12 12M12-1L0 11" /></svg>
          </button>
        </div>
        <Toolbar />
        <div className="flex min-h-0 flex-1">
          <main className="relative min-w-0 flex-1 border-t-2 border-[#a0a0a0]">
            <div className="h-full overflow-hidden border-t border-[#696969]"><Model /></div>
            <InspectorDialog />
          </main>
          <Tray />
        </div>
      </div>
      <BackgroundWindow />
    </div>
  );
}
